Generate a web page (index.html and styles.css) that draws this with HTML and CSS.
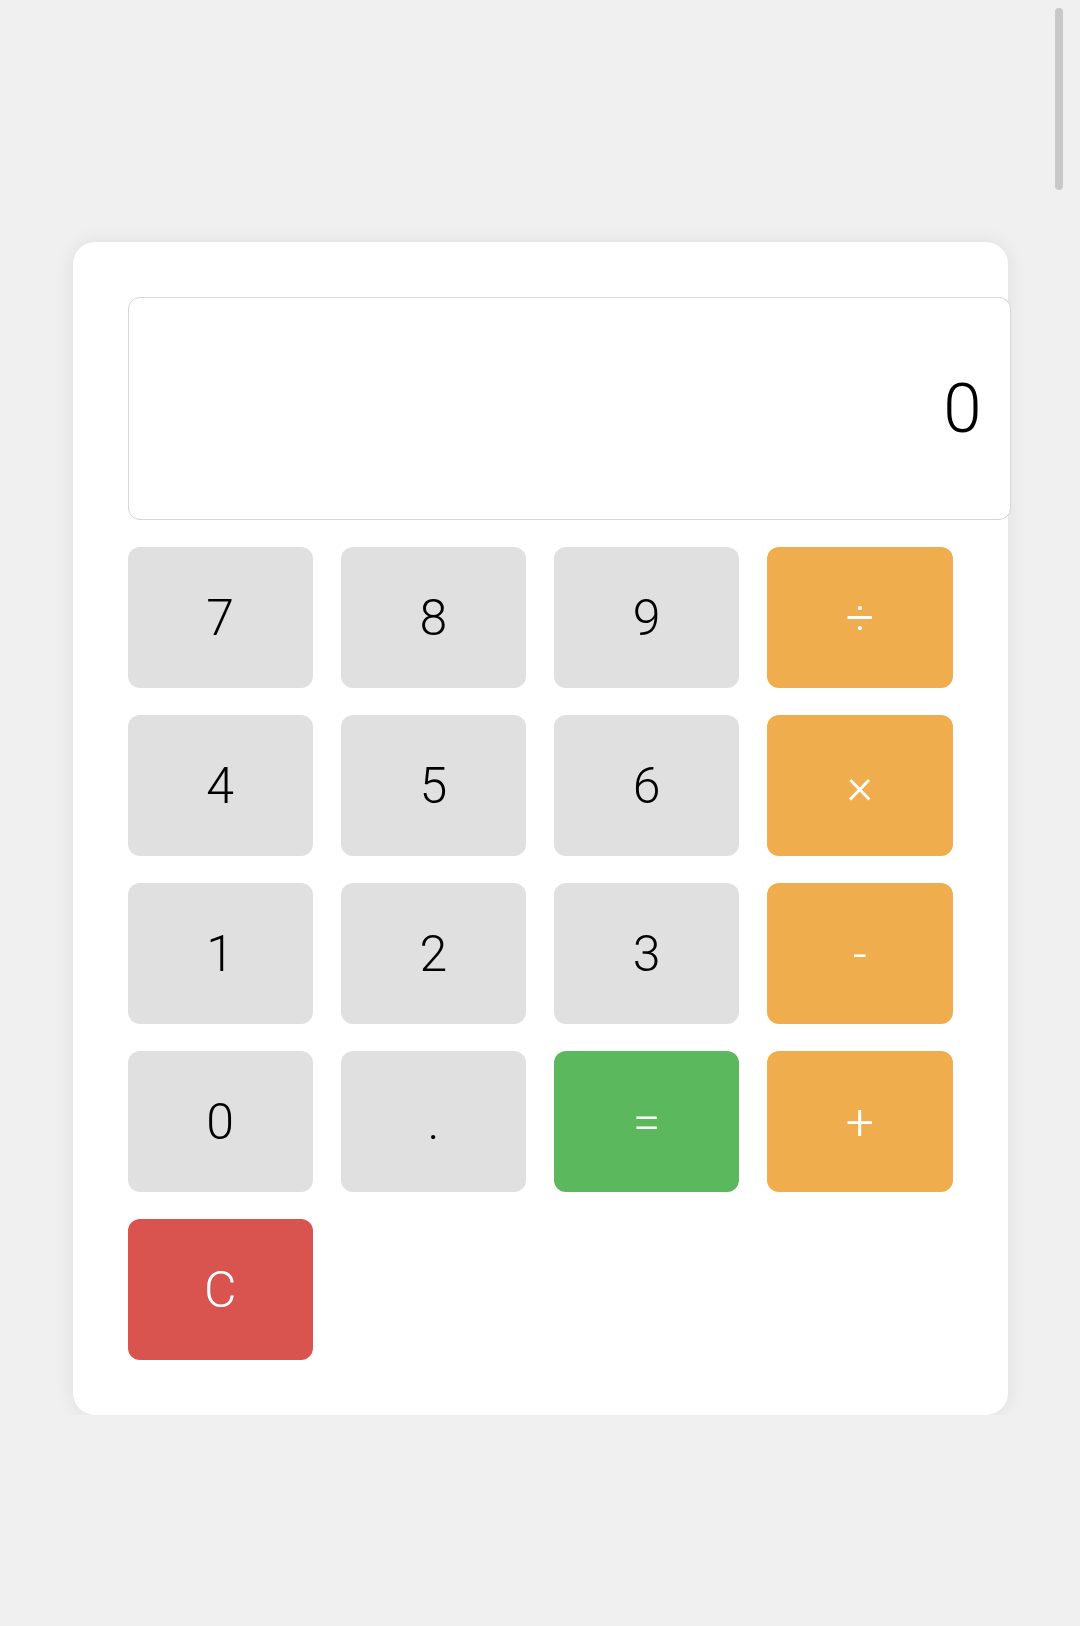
FILE: index.html
```html
<!DOCTYPE html>
<html lang="en">
<head>
  <meta charset="UTF-8" />
  <meta name="viewport" content="width=device-width, initial-scale=1.0" />
  <title>Calculator</title>
  <link rel="stylesheet" href="styles.css">
</head>
<body>
  <div class="scroll-thumb"></div>

  <div class="calculator">
    <input type="text" id="display" class="display" value="0" readonly />
    <div class="buttons">
      <button class="btn">7</button>
      <button class="btn">8</button>
      <button class="btn">9</button>
      <button class="btn operator">÷</button>
      <button class="btn">4</button>
      <button class="btn">5</button>
      <button class="btn">6</button>
      <button class="btn operator">×</button>
      <button class="btn">1</button>
      <button class="btn">2</button>
      <button class="btn">3</button>
      <button class="btn operator">-</button>
      <button class="btn">0</button>
      <button class="btn">.</button>
      <button class="btn equals">=</button>
      <button class="btn operator">+</button>
      <button class="btn clear">C</button>
    </div>
  </div>
</body>
</html>
```

FILE: styles.css
```css
body {
  font-family: Roboto, "Liberation Sans", sans-serif;
  margin: 0;
  padding: 0;
  background: #f0f0f0;
}
.scroll-thumb {
  position: fixed;
  top: 8px;
  right: 17px;
  width: 8px;
  height: 182px;
  border-radius: 4px;
  background: #c8c8c8;
}
.calculator {
  width: 935px;
  box-sizing: border-box;
  margin: 242px auto 0;
  padding: 55px;
  background: #fff;
  border-radius: 22px;
  box-shadow: 0 0 20px rgba(0, 0, 0, 0.08);
}
.display {
  display: block;
  width: 100%;
  height: 221px;
  padding: 0 28px;
  margin: 0 0 27px;
  border: 1px solid #d6d6d6;
  border-radius: 12px;
  font-family: inherit;
  font-size: 69px;
  font-weight: 300;
  color: #000;
  text-align: right;
  background: #fff;
  outline: none;
}
.buttons {
  display: grid;
  grid-template-columns: repeat(4, 1fr);
  gap: 27px 28px;
}
.btn {
  height: 141px;
  border: none;
  border-radius: 12px;
  background: #e0e0e0;
  color: #000;
  font-family: inherit;
  font-size: 50px;
  font-weight: 300;
  padding: 0;
}
.operator {
  background: #f0ad4e;
  color: #fff;
}
.equals {
  background: #5cb85c;
  color: #fff;
}
.clear {
  background: #d9534f;
  color: #fff;
}
```
